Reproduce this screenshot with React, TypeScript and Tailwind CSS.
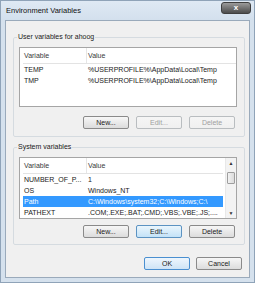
import React from "react";

const USER_VARS = [
  { name: "TEMP", value: "%USERPROFILE%\\AppData\\Local\\Temp" },
  { name: "TMP", value: "%USERPROFILE%\\AppData\\Local\\Temp" },
];

const SYSTEM_VARS = [
  { name: "NUMBER_OF_P...", value: "1" },
  { name: "OS", value: "Windows_NT" },
  { name: "Path", value: "C:\\Windows\\system32;C:\\Windows;C:\\", selected: true },
  { name: "PATHEXT", value: ".COM;.EXE;.BAT;.CMD;.VBS;.VBE;.JS;...." },
];

type Variant = "normal" | "disabled" | "hot" | "default";

function Btn({ label, variant = "normal" }: { label: string; variant?: Variant }) {
  const styles: Record<Variant, string> = {
    normal: "border-[#8a8a8a] from-[#f7f7f7] to-[#dcdcdc] text-[#1a1a1a]",
    disabled: "border-[#b9bdc0] from-[#f5f5f5] to-[#f0f0f0] text-[#a0a0a0]",
    hot: "border-[#5c93c2] from-[#eaf6fd] to-[#c4e2f7] text-[#1a1a1a]",
    default: "border-[#4a8fd0] from-[#eef6fd] to-[#cfe4f6] text-[#1a1a1a]",
  };
  return (
    <button
      className={`w-[46px] h-[13px] rounded-[2px] border bg-linear-to-b text-[7px] leading-none flex items-center justify-center ${styles[variant]}`}
    >
      {label}
    </button>
  );
}

function Row({ name, value, selected }: { name: string; value: string; selected?: boolean }) {
  return (
    <div
      className={`h-[11px] ml-[3px] flex items-center whitespace-nowrap overflow-hidden ${
        selected ? "bg-[#3399ff] text-white" : "text-[#1a1a1a]"
      }`}
    >
      <span className="w-[65px] shrink-0 pl-[1px]">{name}</span>
      <span>{value}</span>
    </div>
  );
}

function Header() {
  return (
    <div className="h-[16px] flex items-center border-b border-[#e3e3e3] text-[#3a3a3a] ml-[3px]">
      <span className="w-[64px] shrink-0 pl-[1px] border-r border-[#e6e6e6] h-full flex items-center">Variable</span>
      <span className="pl-[1px]">Value</span>
    </div>
  );
}

function ScrollBar() {
  return (
    <div className="w-[11px] shrink-0 flex flex-col bg-[#f3f3f3] border-l border-[#e8e8e8]">
      <div className="h-[10px] flex items-center justify-center text-[5px] text-[#333]">▲</div>
      <div className="flex-1 pt-[4px] px-[1px]">
        <div className="h-[12px] rounded-[1px] border border-[#9e9e9e] bg-linear-to-r from-[#f2f2f2] to-[#dcdcdc]" />
      </div>
      <div className="h-[10px] flex items-center justify-center text-[5px] text-[#333]">▼</div>
    </div>
  );
}

export default function App() {
  return (
    <div className="w-[255px] h-[283px] flex flex-col bg-[#d5e1ed] border border-[#8fa3b8] font-['Liberation_Sans',Arial,sans-serif] text-[7px] leading-none">
      {/* Title bar */}
      <div className="h-[19px] flex items-start justify-between pl-[5px] pr-[3px] bg-linear-to-b from-[#dfe9f4] to-[#d3e0ed]">
        <span className="mt-[6px] text-[7.5px] text-[#111]">Environment Variables</span>
        <div className="mt-[1px] w-[30px] h-[12px] rounded-[3px] border border-[#3f3f3f] bg-linear-to-b from-[#9b9b9b] to-[#4d4d4d] flex items-center justify-center text-white text-[8px] font-bold">
          x
        </div>
      </div>

      {/* Client area */}
      <div className="flex-1 mx-[4px] mb-[4px] border border-[#9aaabb] bg-[#f0f0f0] flex flex-col">
        {/* User variables */}
        <fieldset className="mt-[11px] ml-[7px] w-[232px] border border-[#d5dbe0] rounded-[2px] pb-[7px]">
          <legend className="ml-[3px] px-[1px] h-[10px] leading-[10px] text-[#1a1a1a]">User variables for ahoog</legend>
          <div className="mt-[5px] ml-[5px] w-[218px] h-[60px] border border-[#a5a5a5] bg-white">
            <Header />
            {USER_VARS.map((v) => (
              <Row key={v.name} name={v.name} value={v.value} />
            ))}
          </div>
          <div className="mt-[9px] flex justify-end gap-[7px] pr-[9px]">
            <Btn label="New..." />
            <Btn label="Edit..." variant="disabled" />
            <Btn label="Delete" variant="disabled" />
          </div>
        </fieldset>

        {/* System variables */}
        <fieldset className="mt-[5px] ml-[7px] w-[232px] border border-[#d5dbe0] rounded-[2px] pb-[6px]">
          <legend className="ml-[3px] px-[1px] h-[10px] leading-[10px] text-[#1a1a1a]">System variables</legend>
          <div className="mt-[5px] ml-[5px] w-[218px] h-[62px] border border-[#a5a5a5] bg-white flex">
            <div className="flex-1 min-w-0 pr-[2px]">
              <Header />
              {SYSTEM_VARS.map((v) => (
                <Row key={v.name} name={v.name} value={v.value} selected={v.selected} />
              ))}
            </div>
            <ScrollBar />
          </div>
          <div className="mt-[6px] flex justify-end gap-[7px] pr-[9px]">
            <Btn label="New..." />
            <Btn label="Edit..." variant="hot" />
            <Btn label="Delete" />
          </div>
        </fieldset>

        <div className="mt-[12px] flex justify-end gap-[6px] pr-[7px]">
          <Btn label="OK" variant="default" />
          <Btn label="Cancel" />
        </div>
      </div>
    </div>
  );
}
